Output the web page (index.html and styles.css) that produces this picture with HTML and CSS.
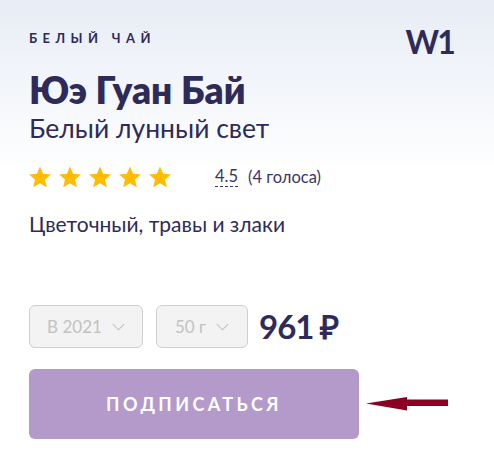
FILE: index.html
```html
<!DOCTYPE html>
<html lang="ru">
<head>
  <meta charset="UTF-8" />
  <meta name="viewport" content="width=device-width, initial-scale=1.0"/>
  <title>Юэ Гуан Бай</title>
  <link rel="stylesheet" href="styles.css">
</head>
<body>
  <div class="product">
    <div class="head">
      <div>
        <div class="category">Белый чай</div>
        <h1>Юэ Гуан Бай</h1>
        <div class="subtitle">Белый лунный свет</div>
      </div>
      <div class="code">W1</div>
    </div>

    <div class="rating">
      <div class="stars">
        <svg viewBox="0 0 24 24"><path d="M12 1.5l3.1 7.2 7.8.7-5.9 5.2 1.8 7.7L12 18.2l-6.8 4.1 1.8-7.7L1.1 9.4l7.8-.7z"/></svg>
        <svg viewBox="0 0 24 24"><path d="M12 1.5l3.1 7.2 7.8.7-5.9 5.2 1.8 7.7L12 18.2l-6.8 4.1 1.8-7.7L1.1 9.4l7.8-.7z"/></svg>
        <svg viewBox="0 0 24 24"><path d="M12 1.5l3.1 7.2 7.8.7-5.9 5.2 1.8 7.7L12 18.2l-6.8 4.1 1.8-7.7L1.1 9.4l7.8-.7z"/></svg>
        <svg viewBox="0 0 24 24"><path d="M12 1.5l3.1 7.2 7.8.7-5.9 5.2 1.8 7.7L12 18.2l-6.8 4.1 1.8-7.7L1.1 9.4l7.8-.7z"/></svg>
        <svg viewBox="0 0 24 24"><path d="M12 1.5l3.1 7.2 7.8.7-5.9 5.2 1.8 7.7L12 18.2l-6.8 4.1 1.8-7.7L1.1 9.4l7.8-.7z"/></svg>
      </div>
      <span class="score">4.5</span>
      <span class="votes">(4 голоса)</span>
    </div>

    <p class="notes">Цветочный, травы и злаки</p>

    <div class="buy">
      <div class="select year">В 2021 <svg viewBox="0 0 14 8"><path d="M1 1l6 6 6-6"/></svg></div>
      <div class="select weight">50 г <svg viewBox="0 0 14 8"><path d="M1 1l6 6 6-6"/></svg></div>
      <div class="price">961 ₽</div>
    </div>

    <div class="action">
      <button class="subscribe">Подписаться</button>
      <svg class="arrow" viewBox="0 0 82 14"><path d="M0 6.5L41 0v2.5h41v6.5H41v4.5z"/></svg>
    </div>
  </div>
</body>
</html>
```

FILE: styles.css
```css
body {
  margin: 0;
  font-family: 'Lato', 'Open Sans', sans-serif;
  color: #2f2b59;
  background: linear-gradient(to bottom, #e7ecf5 0, #ffffff 170px);
  min-height: 455px;
}
.product {
  padding: 28px 40px 0 29px;
}
.head {
  display: flex;
  justify-content: space-between;
}
.category {
  font-size: 13px;
  font-weight: 700;
  letter-spacing: 5.4px;
  text-transform: uppercase;
  line-height: 20px;
}
h1 {
  margin: 20px 0 0;
  font-size: 37px;
  font-weight: 800;
  line-height: 44px;
}
.subtitle {
  font-size: 26.5px;
  line-height: 32px;
  margin-top: 0;
}
.code {
  font-size: 32px;
  font-weight: 700;
  letter-spacing: -1.8px;
  margin-top: -6px;
  line-height: 40px;
}
.rating {
  display: flex;
  align-items: center;
  margin-top: 21px;
  font-size: 16.5px;
  color: #3a3663;
}
.stars {
  display: flex;
  gap: 6px;
  margin-left: -1px;
  margin-right: 43px;
}
.stars svg {
  width: 24px;
  height: 24px;
  fill: #ffbc00;
}
.score {
  border-bottom: 1px dashed #3a3663;
  line-height: 19px;
  margin-right: 10px;
}
.notes {
  margin: 22px 0 0;
  font-size: 21px;
  line-height: 26px;
}
.buy {
  display: flex;
  align-items: center;
  gap: 13px;
  margin-top: 67px;
}
.select {
  box-sizing: border-box;
  height: 43px;
  border: 1px solid #cfcfcf;
  border-radius: 6px;
  background: #f3f3f3;
  color: #c2c2c2;
  font-size: 17px;
  display: flex;
  align-items: center;
  justify-content: center;
  gap: 10px;
}
.select svg {
  width: 13px;
  height: 8px;
  fill: none;
  stroke: #c2c2c2;
  stroke-width: 1.2;
}
.year { width: 114px; }
.weight { width: 92px; }
.price {
  font-size: 33px;
  font-weight: 700;
  letter-spacing: -1px;
  margin-left: -2px;
}
.action {
  display: flex;
  align-items: center;
  gap: 7px;
  margin-top: 20px;
}
.subscribe {
  width: 330px;
  height: 70px;
  border: none;
  border-radius: 6px;
  background: #b39acb;
  color: #fff;
  font-family: inherit;
  font-size: 18px;
  font-weight: 700;
  letter-spacing: 3.4px;
  text-transform: uppercase;
}
.arrow {
  width: 82px;
  height: 14px;
  fill: #8a0022;
}
```
